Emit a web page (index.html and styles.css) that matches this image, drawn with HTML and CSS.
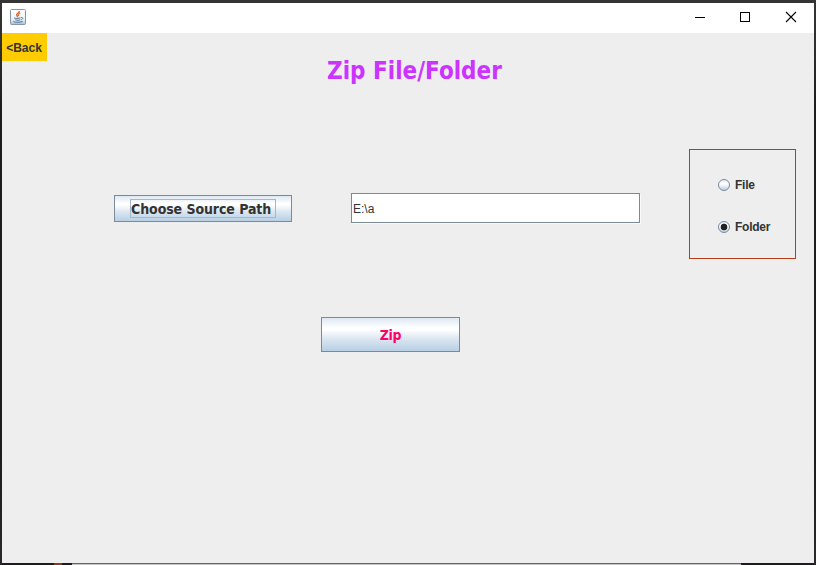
FILE: index.html
```html
<!DOCTYPE html>
<html lang="en">
<head>
<meta charset="utf-8">
<title>Zip File/Folder</title>
<link rel="stylesheet" href="styles.css">
</head>
<body>
<div class="window">
  <header class="titlebar">
    <svg class="java" width="16" height="16" viewBox="0 0 16 16" fill="none">
      <defs><linearGradient id="tile" x2="0" y2="1"><stop stop-color="#fff"/><stop offset=".65" stop-color="#eef2f6"/><stop offset="1" stop-color="#a9bccd"/></linearGradient></defs>
      <rect x=".5" y=".5" width="15" height="15" rx="1" fill="url(#tile)" stroke="#8497aa"/>
      <path d="M9.3 2C9.6 4 5.8 4.5 6.5 6.2L7.8 8M10.3 4C7.5 5.2 8 6 8.7 7" stroke="#e36e35" stroke-width="1.3"/>
      <path d="M4.5 8.7C3 9.7 8 9.6 10.5 8.8M5.3 10.7c1.7.7 3.7.7 5 0M11 8.5c2.6-.2 2 1.8.2 2.1M3.8 12.2c-1.2 1 4.9 1.6 8.8.3" stroke="#47729a"/>
    </svg>
    <div class="controls">
      <svg width="46" height="30" viewBox="0 0 46 30"><path d="M17 14.5h10" stroke="#000"/></svg>
      <svg width="46" height="30" viewBox="0 0 46 30"><rect x="16.5" y="9.5" width="9" height="9" fill="none" stroke="#000"/></svg>
      <svg width="46" height="30" viewBox="0 0 46 30"><path d="M16 9l10 10M26 9L16 19" stroke="#000" stroke-width="1.1"/></svg>
    </div>
  </header>
  <main class="content">
    <div class="top">
      <button class="back">&lt;Back</button>
      <h1>Zip File/Folder</h1>
    </div>
    <div class="form">
      <button class="metal choose"><span>Choose Source Path</span></button>
      <input class="path" type="text" value="E:\a">
      <div class="options">
        <label><i class="radio"></i>File</label>
        <label><i class="radio checked"></i>Folder</label>
      </div>
    </div>
    <button class="metal zip">Zip</button>
  </main>
</div>
<footer class="backdrop"><i class="spark"></i><i class="panel"></i></footer>
</body>
</html>
```
FILE: styles.css
```css
* { box-sizing: border-box; }
body {
  margin: 0;
  width: 816px;
  height: 565px;
  overflow: hidden;
  padding: 3px 2px 0;
  background: linear-gradient(#353535 0, #303030 40px, #1c1c1e 110px, #1c1c1e 450px, #29292b);
  font: bold 12px "Liberation Sans", Arial, sans-serif;
  color: #333;
}
button, input { font: inherit; border-radius: 0; margin: 0; }
.window { width: 812px; height: 560px; background: #eee; }
.titlebar {
  height: 30px;
  background: #fff;
  display: flex;
  align-items: center;
  justify-content: space-between;
  padding-left: 8px;
}
.java { margin-top: -2px; }
.controls { display: flex; margin-right: -2px; }
.content { height: 530px; }
.top { display: flex; align-items: flex-start; height: 116px; }
.back {
  width: 45px;
  height: 28px;
  padding: 1px 1px 0 0;
  border: 0;
  background: #fc0;
  color: #333;
}
h1 {
  margin: 22px 0 0 280px;
  font: bold 24px/32px "DejaVu Sans Condensed", "DejaVu Sans", sans-serif;
  font-stretch: condensed;
  white-space: nowrap;
  color: #c3f;
}
.form { display: flex; align-items: flex-start; padding-left: 112px; height: 110px; }
.metal {
  display: flex;
  align-items: center;
  justify-content: center;
  padding: 0;
  border: 1px solid #7a8a99;
  background: linear-gradient(#dde8f3 0, #fff 30%, #fff 36%, #dce7f1 62%, #b8cfe5);
  font: bold 14px/18px "DejaVu Sans Condensed", "DejaVu Sans", sans-serif;
  font-stretch: condensed;
  letter-spacing: -0.4px;
  white-space: nowrap;
}
.choose { width: 178px; height: 27px; margin-top: 46px; color: #333; letter-spacing: -0.08px; }
.choose span {
  width: 146px;
  height: 19px;
  border: 1px solid #a3b8cc;
  text-align: left;
  line-height: 18px;
}
.path {
  width: 289px;
  height: 30px;
  margin: 44px 0 0 59px;
  padding: 1px 1px 0;
  border: 1px solid #7a8a99;
  background: #fff;
  color: #333;
  font-weight: normal;
  box-shadow: 1px 1px #fafafa;
}
.options {
  width: 107px;
  height: 110px;
  margin-left: 49px;
  padding: 27px 0 0 28px;
  border: 1px solid #b73d17;
  display: flex;
  flex-direction: column;
  gap: 26px;
}
.options label { display: flex; align-items: center; gap: 5px; height: 16px; letter-spacing: -0.25px; }
.radio {
  width: 12px;
  height: 12px;
  border: 1px solid #7a8a99;
  border-radius: 50%;
  background: linear-gradient(#e3edf6, #fff 40%, #b8cfe5);
}
.checked { background: radial-gradient(circle, #222 0 3px, transparent 3.7px), linear-gradient(#e3edf6, #fff 40%, #b8cfe5); }
.zip { width: 139px; height: 35px; margin: 58px 0 0 319px; color: #f06; }
.backdrop { display: flex; height: 2px; background: #1d1b1d; }
.spark { width: 8px; margin-left: 52px; background: #8c3823; }
.panel { width: 669px; margin-left: 10px; background: #c5c5c5; border-top: 1px solid #666; }
```
